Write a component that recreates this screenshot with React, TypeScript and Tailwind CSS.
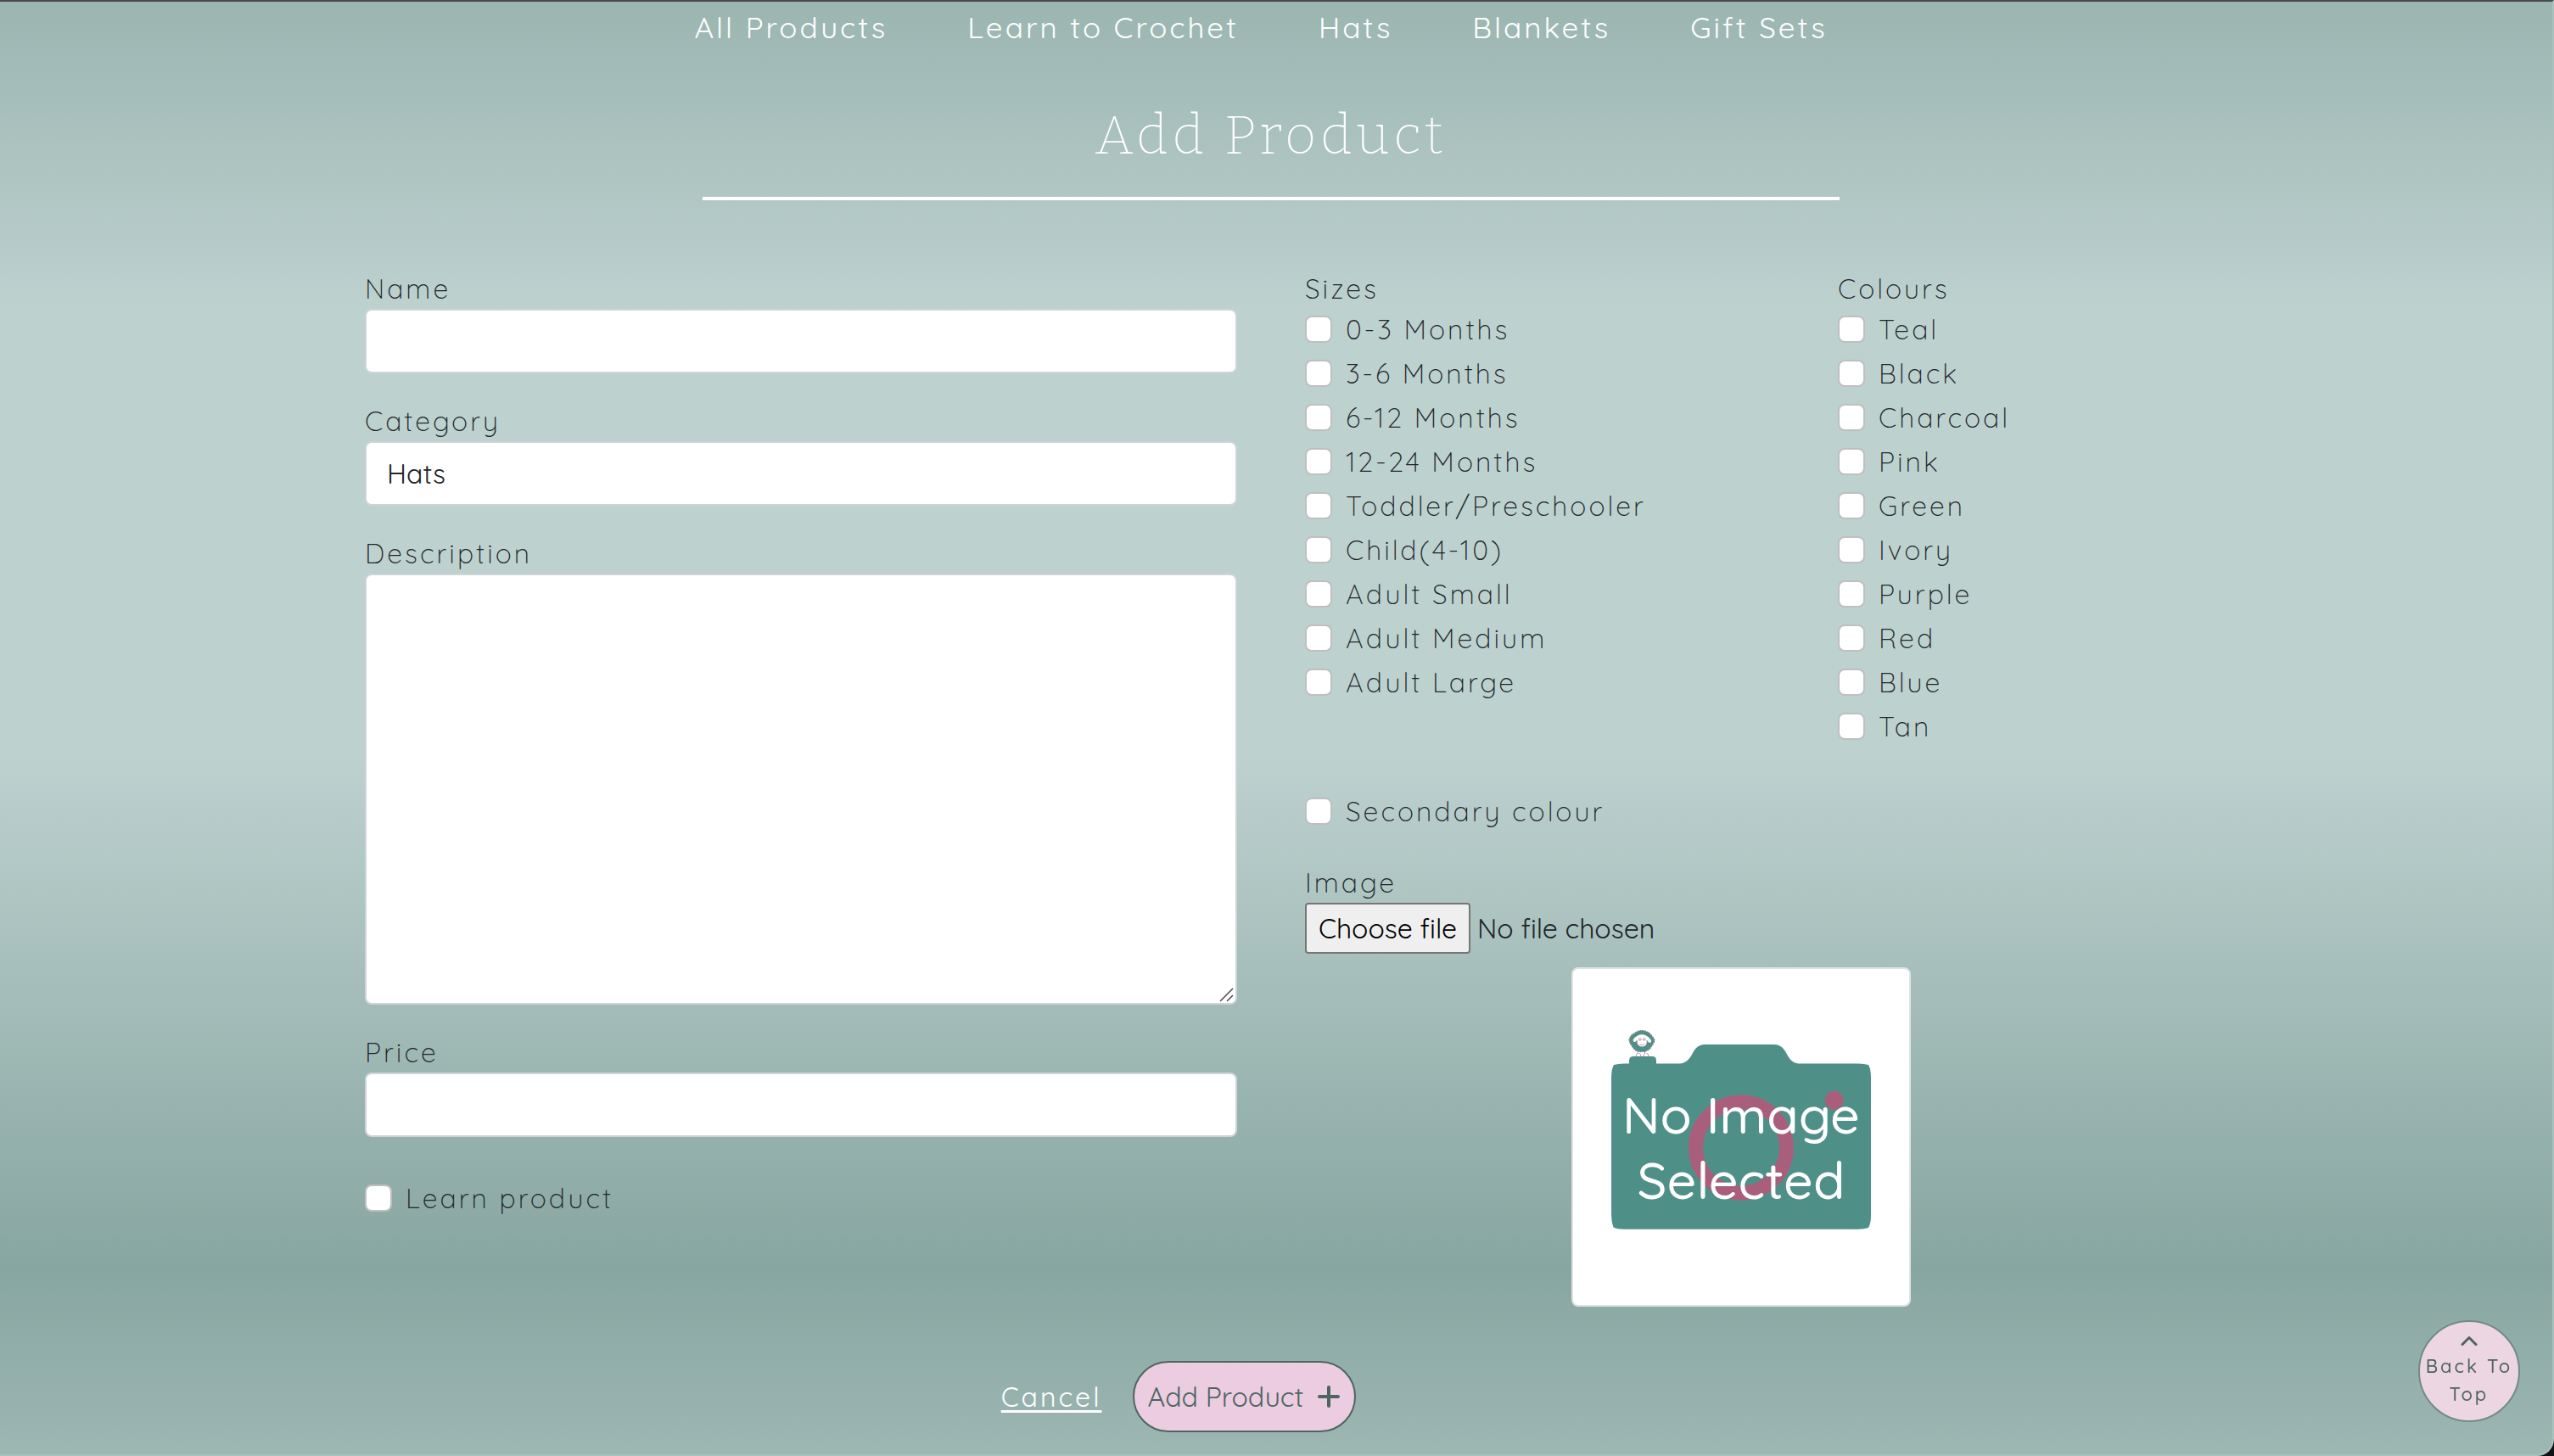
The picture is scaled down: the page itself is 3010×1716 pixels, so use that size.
import React, { useState } from "react";

const sans = "font-['Quicksand','Lato',sans-serif]";

const navLinks = ["All Products", "Learn to Crochet", "Hats", "Blankets", "Gift Sets"];

const sizes = [
  "0-3 Months",
  "3-6 Months",
  "6-12 Months",
  "12-24 Months",
  "Toddler/Preschooler",
  "Child(4-10)",
  "Adult Small",
  "Adult Medium",
  "Adult Large",
];

const colours = ["Teal", "Black", "Charcoal", "Pink", "Green", "Ivory", "Purple", "Red", "Blue", "Tan"];

const labelText = "text-[32px] leading-[48px] font-light tracking-[3px] text-[#212529]";
const fieldBox = "block w-full rounded-lg border-2 border-[#ced4da] bg-white text-[32px] text-[#212529] outline-none";

function Field({ id, label, children }: { id: string; label: string; children: React.ReactNode }) {
  return (
    <div>
      <label htmlFor={id} className={`block ${labelText}`}>
        {label}
      </label>
      {children}
    </div>
  );
}

function Check({ label }: { label: string }) {
  return (
    <label className={`flex h-12 items-center gap-4 ${labelText}`}>
      <input
        type="checkbox"
        className="size-8 shrink-0 appearance-none rounded-lg border-2 border-[#bfbfbf] bg-white checked:bg-[#4e9088]"
      />
      {label}
    </label>
  );
}

function CheckGroup({ legend, items }: { legend: string; items: string[] }) {
  return (
    <fieldset>
      <legend className={labelText}>{legend}</legend>
      <div className="flex flex-col gap-1">
        {items.map((item) => (
          <Check key={item} label={item} />
        ))}
      </div>
    </fieldset>
  );
}

function Placeholder() {
  return (
    <svg viewBox="0 0 396 396" className="block w-full" role="img" aria-label="No Image Selected">
      <g transform="translate(-2 -2)">
        <path
          d="M62 113.500H68V110Q68 105 73 105H95Q100 105 100 110V113.500H128C137 113 141 105 144 99C148 93 152 91 158 91H239C245 91 249 94 252 99C256 106 259 113 268 113.500H338Q345 113.500 350 115Q353 120 353 130V292Q353 302 350 307Q345 308.700 338 308.700H62Q54 308.700 49.500 306.500Q47 300 47 292V130Q47 120 50 115Q55 113.500 62 113.500Z"
          fill="#4e9088"
        />
        <circle cx="200" cy="212.500" r="53.500" fill="none" stroke="#a95f7c" strokeWidth="17" />
        <circle cx="309.700" cy="156.700" r="11" fill="#a95f7c" />
        <path
          d="M76 105q0-3 2.500-3.500M78.500 98v4M82 105q-1-3-2-4M85 105q0-3 2-4M86.500 98v4M91 105q0-3-2.500-3.500"
          fill="none"
          stroke="#b98ba0"
          strokeWidth="1"
        />
        <path
          d="M83 74.500Q91 75 94 80Q98 84 98 87Q96 91 94 94Q91 99 84 99.500Q75 100 72 94Q69 90 68 86Q69 80 74 78Q78 74.500 83 74.500Z"
          fill="#4e9088"
          stroke="#8c7f92"
          strokeWidth="1.200"
          strokeDasharray="2 1"
        />
        <path
          d="M78 80.500Q83 78 88 80.500Q91 82 93 84.500Q95 87 93 89Q90 89 89 85.500Q89.500 90 87.500 92Q83 95 79 92Q77 90 77.500 85.500Q76 89 73 87.500Q72 86 73.500 84Q75 82 78 80.500Z"
          fill="#fff"
        />
        <path
          d="M79.500 84h2.500v2h-2.500zM84.500 84h2.500v2h-2.500zM80 91q3 2 6 0M77.500 86q-1 3 .5 5M89 86q.5 3-1 5"
          fill="none"
          stroke="#b98ba0"
          strokeWidth="0.800"
        />
        <text x="200" y="196" textAnchor="middle" fontSize="61" fontWeight="500" fill="#fff">
          No Image
        </text>
        <text x="200" y="273" textAnchor="middle" fontSize="61" fontWeight="500" fill="#fff">
          Selected
        </text>
      </g>
    </svg>
  );
}

export default function App() {
  const [fileName, setFileName] = useState("No file chosen");

  return (
    <div className={`bg-[#0e1415] ${sans}`}>
      <div className="min-h-screen rounded-br-[20px] border-t-2 border-r-2 border-b-2 border-t-[#4a4a4a] border-r-[#a9c2be] border-b-[#a9c2be] bg-[linear-gradient(180deg,#9bb5b1_0%,#bdd1cf_21%,#bdd1cf_52%,#88a6a1_87%,#9db7b3_100%)] pr-3">
        <nav className="mr-6 flex justify-center gap-[94px] text-[35px] leading-[60px] tracking-[3px] text-white">
          {navLinks.map((link) => (
            <a key={link} href="#">
              {link}
            </a>
          ))}
        </nav>

        <main className="mx-auto max-w-[2136px]">
          <h1 className="mx-auto h-[174px] max-w-[1340px] border-b-4 border-white pt-[50px] text-center font-['Bitter','Liberation_Serif',serif] text-[64px] leading-[96px] font-extralight tracking-[5px] text-white">
            Add Product
          </h1>

          <form className="pt-20" onSubmit={(e) => e.preventDefault()}>
            <div className="grid grid-cols-2 gap-20">
              <div className="flex flex-col gap-8">
                <Field id="name" label="Name">
                  <input id="name" type="text" className={`h-[76px] px-6 ${fieldBox}`} />
                </Field>
                <Field id="category" label="Category">
                  <select id="category" className={`h-[76px] appearance-none px-6 ${fieldBox}`}>
                    {["Hats", "Blankets", "Gift Sets"].map((c) => (
                      <option key={c}>{c}</option>
                    ))}
                  </select>
                </Field>
                <Field id="description" label="Description">
                  <div className="relative">
                    <textarea
                      id="description"
                      className={`h-[508px] resize-y px-6 py-3 [&::-webkit-resizer]:bg-transparent ${fieldBox}`}
                    />
                    <svg
                      viewBox="0 0 20 20"
                      className="pointer-events-none absolute right-0.5 bottom-0.5 size-5 rounded-br-md bg-white"
                      stroke="#4a4a4a"
                      strokeWidth="1.500"
                    >
                      <path d="M2 18L17 3M10 18L17 11" />
                    </svg>
                  </div>
                </Field>
                <Field id="price" label="Price">
                  <input id="price" type="text" className={`h-[76px] px-6 ${fieldBox}`} />
                </Field>
                <div className="pt-4">
                  <Check label="Learn product" />
                </div>
              </div>

              <div>
                <div className="grid grid-cols-[628fr_400fr]">
                  <CheckGroup legend="Sizes" items={sizes} />
                  <CheckGroup legend="Colours" items={colours} />
                </div>
                <div className="mt-[52px]">
                  <Check label="Secondary colour" />
                </div>
                <div className={`mt-9 ${labelText}`}>Image</div>
                <div className="flex items-center gap-2 text-[32px] text-[#212529]">
                  <input
                    id="image"
                    type="file"
                    className="peer sr-only"
                    aria-label="Image"
                    onChange={(e) => setFileName(e.target.files?.[0]?.name ?? "No file chosen")}
                  />
                  <label
                    htmlFor="image"
                    className="flex h-[60px] items-center rounded border-2 border-[#767676] bg-[#efefef] px-3.5 text-black"
                  >
                    Choose file
                  </label>
                  <span>{fileName}</span>
                </div>
                <div className="mx-auto mt-4 w-[400px] overflow-hidden rounded-lg border-2 border-[#dee2e6] bg-white">
                  <Placeholder />
                </div>
              </div>
            </div>

            <div className="mt-16 mr-[218px] flex items-center justify-center gap-9">
              <a href="#" className="text-[32px] tracking-[3px] text-white underline decoration-3 underline-offset-4">
                Cancel
              </a>
              <button
                type="submit"
                className="flex h-[84px] items-center gap-4 rounded-full border-2 border-[#4d6561] bg-[#eccce0] px-4 text-[32px] text-[#4d6561]"
              >
                Add Product
                <svg viewBox="0 0 28 28" className="size-7" fill="none" stroke="currentColor" strokeWidth="4" strokeLinecap="round">
                  <path d="M14 3v22M3 14h22" />
                </svg>
              </button>
            </div>
          </form>
        </main>
      </div>

      <button
        type="button"
        className="fixed right-10 bottom-10 flex size-[120px] flex-col items-center rounded-full border-2 border-[#718b86] bg-[#ecd6e2] pt-4 text-[22px] leading-[33px] font-medium tracking-[3px] text-[#4d6561]"
      >
        <svg viewBox="0 0 20 12" className="mb-2 h-3 w-5 shrink-0" fill="none" stroke="currentColor" strokeWidth="3" strokeLinecap="round" strokeLinejoin="round">
          <path d="M2 10.500l8-8 8 8" />
        </svg>
        <span className="whitespace-nowrap">Back To</span>
        <span>Top</span>
      </button>
    </div>
  );
}
